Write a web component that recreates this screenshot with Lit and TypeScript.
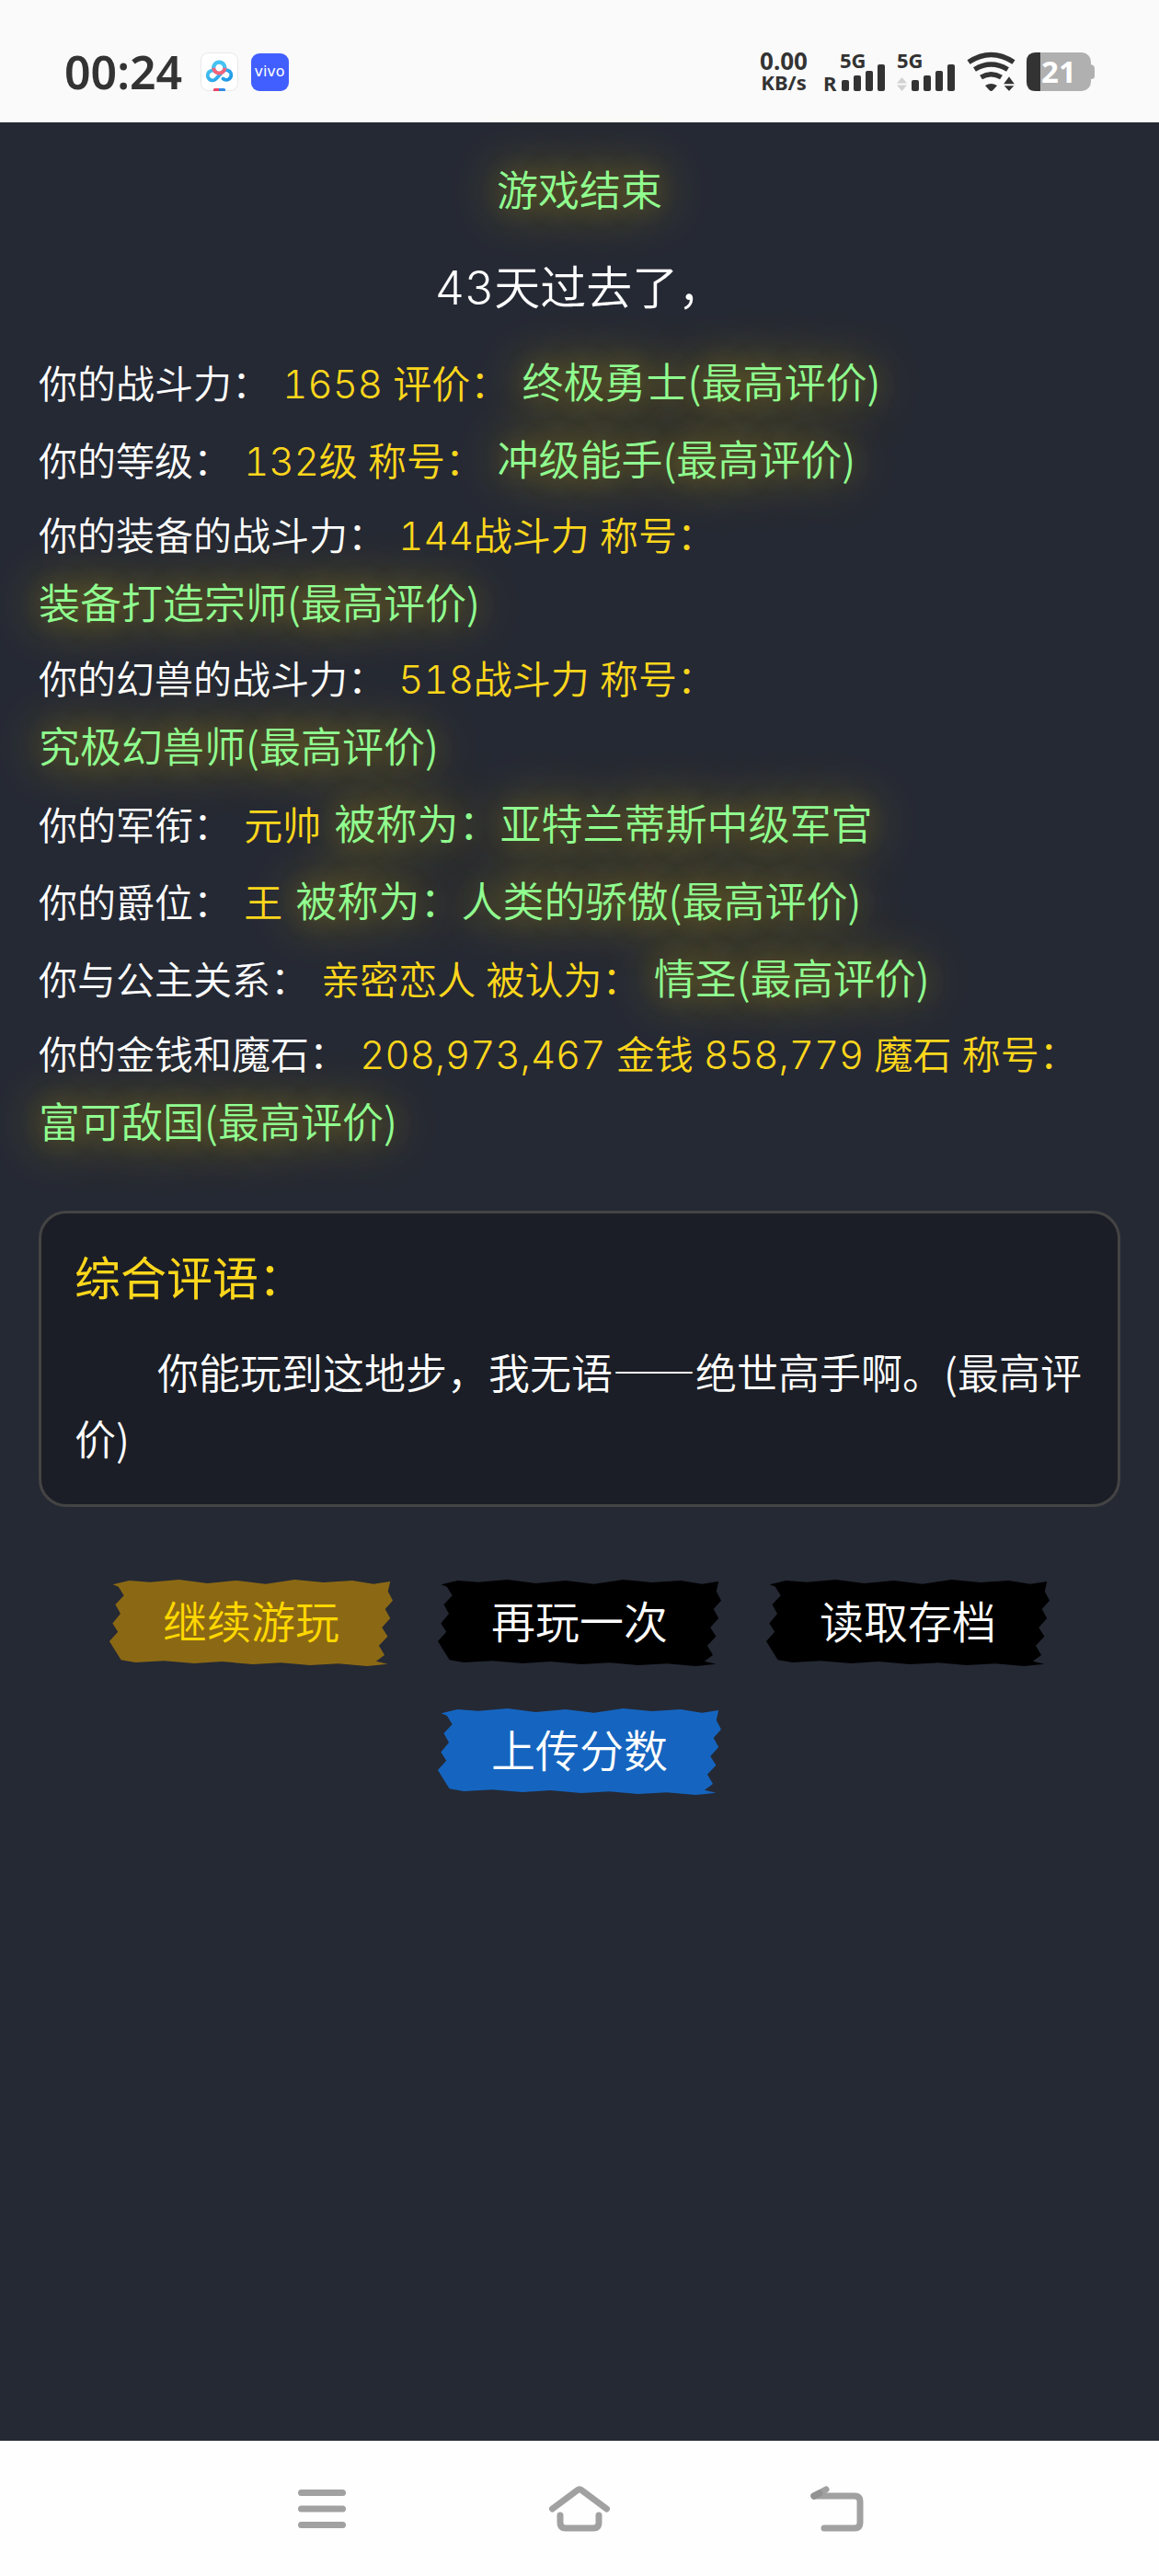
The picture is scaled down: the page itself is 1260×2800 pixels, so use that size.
import { LitElement, html, svg, css } from "lit";
import { customElement } from "lit/decorators.js";

interface Row {
  label: string;
  value: string;
  title: string;
}

const ROWS: Row[] = [
  { label: "你的战斗力：", value: "1658 评价：", title: "终极勇士(最高评价)" },
  { label: "你的等级：", value: "132级 称号：", title: "冲级能手(最高评价)" },
  { label: "你的装备的战斗力：", value: "144战斗力 称号：", title: "装备打造宗师(最高评价)" },
  { label: "你的幻兽的战斗力：", value: "518战斗力 称号：", title: "究极幻兽师(最高评价)" },
  { label: "你的军衔：", value: "元帅", title: "被称为：亚特兰蒂斯中级军官" },
  { label: "你的爵位：", value: "王", title: "被称为：人类的骄傲(最高评价)" },
  { label: "你与公主关系：", value: "亲密恋人 被认为：", title: "情圣(最高评价)" },
  { label: "你的金钱和魔石：", value: "208,973,467 金钱 858,779 魔石 称号：", title: "富可敌国(最高评价)" },
];

@customElement("status-bar")
class StatusBar extends LitElement {
  static styles = css`
    :host {
      display: flex;
      justify-content: space-between;
      padding: 57px 70px 34px;
      background: #fafafa;
      color: #333;
      font-family: "Noto Sans", "Open Sans", sans-serif;
    }
    .side {
      display: flex;
      align-items: center;
      height: 42px;
    }
    .time {
      font-size: 50px;
      line-height: 42px;
      font-weight: 600;
      margin-right: 20px;
    }
    .apps {
      display: flex;
      gap: 14px;
    }
    .speed {
      display: flex;
      flex-direction: column;
      align-items: center;
      font-weight: 700;
      margin-right: 18px;
    }
    .rate {
      font-size: 26px;
      line-height: 22px;
    }
    .unit {
      font-size: 22px;
      line-height: 24px;
    }
    .signals {
      display: flex;
      gap: 12px;
    }
    svg {
      display: block;
      overflow: visible;
    }
    .tag {
      font: 700 22px "Noto Sans", sans-serif;
      fill: #333;
    }
    .brand {
      font: 16px "DejaVu Sans", sans-serif;
      fill: #fff;
    }
    .level {
      font: 700 33px "Noto Sans", sans-serif;
      fill: #fff;
    }
  `;

  private bars(x: number) {
    return [12, 17, 22, 29].map(
      (h, i) => svg`<rect x=${x + i * 13} y=${42 - h} width="8" height=${h} rx="2" fill="#333" />`,
    );
  }

  render() {
    return html`
      <div class="side">
        <span class="time">00:24</span>
        <div class="apps">
          <svg width="41" height="42" viewBox="0 0 41 42" role="img" aria-label="网盘">
            <defs>
              <linearGradient id="sky" x1="0" y1="0" x2="1" y2="1">
                <stop offset="0" stop-color="#4fcbf3" />
                <stop offset="1" stop-color="#1e96e6" />
              </linearGradient>
            </defs>
            <rect x="0.5" y="0.5" width="40" height="41" rx="8" fill="#fff" stroke="#e8e8e8" />
            <path
              d="M23 22 L17 28.5 A5.3 5.3 0 1 1 16.6 21 M14 17 A6 6 0 0 1 26.5 17 M24 21 A5.3 5.3 0 1 1 24.5 28.5"
              fill="none" stroke="url(#sky)" stroke-width="4" stroke-linecap="round" />
            <path d="M14.3 16.5 A6 6 0 0 0 26.3 16.5" fill="none" stroke="#f2647c" stroke-width="4" />
            <path d="M14.3 16.5 A6 6 0 0 1 26.3 16.5" fill="none" stroke="#46c3f2" stroke-width="4" />
            <path d="M15 39 H21 V42 H14 V40 Z" fill="#ee4166" />
            <path d="M20 39 H26 L27 40 V42 H20 Z" fill="#2f8be6" />
          </svg>
          <svg width="41" height="42" viewBox="0 0 41 42" role="img" aria-label="vivo">
            <rect y="1" width="41" height="41" rx="9" fill="#415fff" />
            <text class="brand" x="20" y="26" text-anchor="middle">vivo</text>
          </svg>
        </div>
      </div>
      <div class="side">
        <div class="speed">
          <span class="rate">0.00</span>
          <span class="unit">KB/s</span>
        </div>
        <div class="signals">
          <svg width="67" height="42" viewBox="0 0 67 42" role="img" aria-label="5G R">
            <text class="tag" x="17" y="17">5G</text>
            <text class="tag" x="-1" y="42">R</text>
            ${this.bars(19)}
          </svg>
          <svg width="64" height="42" viewBox="0 0 64 42" role="img" aria-label="5G">
            <text class="tag" x="0" y="17">5G</text>
            <path d="M0 33.5 L5.5 27 L11 33.5 Z M0 35.5 L5.5 42 L11 35.5 Z" fill="#d2d2d2" />
            ${this.bars(16)}
          </svg>
          <svg width="53" height="42" viewBox="0 0 53 42" role="img" aria-label="Wi-Fi">
            <g fill="none" stroke="#333" stroke-width="5.5">
              <path d="M2 10.5 Q26.5 -5.5 51 10.5" />
              <path d="M8.5 18.5 Q26.5 7.5 44.5 18.5" />
              <path d="M15.5 27 Q26.5 20.5 37.5 27" />
            </g>
            <path d="M20 36 Q26.5 32 33 36 L28.5 41 Q26.5 43 24.5 41 Z" fill="#333" />
            <path d="M39 34.5 L46 25 L53 34.5 V35 H39 Z M39 35.5 H53 L46 43 Z" fill="#333" stroke="#fafafa" stroke-width="1.5" />
          </svg>
          <svg width="74" height="42" viewBox="0 0 74 42" role="img" aria-label="电量 21">
            <rect width="70" height="42" rx="10" fill="#b0b0b0" />
            <path d="M70 13 Q74 14 74 17 V26 Q74 29 70 29 Z" fill="#b0b0b0" />
            <path d="M15 0 V42 H10 Q0 42 0 32 V10 Q0 0 10 0 Z" fill="#333" />
            <text class="level" x="16" y="33">21</text>
          </svg>
        </div>
      </div>
    `;
  }
}

@customElement("score-report")
class ScoreReport extends LitElement {
  static styles = css`
    :host {
      display: block;
      font-size: 42px;
      font-variant-numeric: tabular-nums;
      color: #fff;
    }
    .heading {
      margin: 0;
      text-align: center;
      font-size: 45px;
      line-height: 75px;
      font-weight: inherit;
    }
    .days {
      margin: 28px 0 26px;
      text-align: center;
      font-size: 50px;
      line-height: 80px;
    }
    .rows {
      display: flex;
      flex-direction: column;
      gap: 9px;
      margin: 0;
      padding: 0;
      list-style: none;
    }
    .row {
      line-height: 72px;
    }
    .value {
      color: #ffd71c;
      margin: 0 3px 0 2px;
    }
    .title {
      display: inline-block;
      font-family: "Noto Sans CJK SC", sans-serif;
      font-size: 45px;
      line-height: 70px;
    }
    .glow {
      color: #90ff90;
      text-shadow: 0 0 30px rgba(255, 215, 0, 0.3), 0 0 60px rgba(255, 215, 0, 0.7);
    }
    .summary {
      margin-top: 58px;
      padding: 36px;
      border: 3px solid #444;
      border-radius: 30px;
      background: #1b1e26;
    }
    .caption {
      margin: 0 0 30px;
      font-size: 50px;
      line-height: 70px;
      font-weight: 400;
      color: #ffd71c;
    }
    .comment {
      margin: 0;
      font-family: "Noto Sans CJK SC", sans-serif;
      font-size: 45px;
      line-height: 72px;
      text-indent: 2em;
    }
    .dash {
      font-variant-east-asian: full-width;
      font-weight: 700;
    }
  `;

  render() {
    return html`
      <h1 class="heading glow">游戏结束</h1>
      <p class="days">43天过去了，</p>
      <ul class="rows">
        ${ROWS.map(
          (r) => html`<li class="row">
            ${r.label} <span class="value">${r.value}</span>
            <span class="title glow">${r.title}</span>
          </li>`,
        )}
      </ul>
      <section class="summary">
        <h2 class="caption">综合评语：</h2>
        <p class="comment">你能玩到这地步，我无语<span class="dash">——</span>绝世高手啊。(最高评价)</p>
      </section>
    `;
  }
}

@customElement("torn-actions")
class TornActions extends LitElement {
  static styles = css`
    :host {
      display: flex;
      flex-wrap: wrap;
      justify-content: center;
      gap: 46px 49px;
    }
    .action {
      border: 0;
      padding: 11px 58px;
      background: #000;
      color: #fff;
      font: inherit;
      font-size: 48px;
      line-height: 72px;
      cursor: pointer;
      clip-path: polygon(
        1.2% 5.7%, 7% 1%, 14.3% 2.8%, 24.6% 0, 34.6% 4.3%, 45.1% 1%, 55.1% 5%, 65.4% 0,
        75.6% 3.2%, 85.7% 1%, 93.2% 5%, 99.1% 2.1%, 98.3% 13.5%, 100% 24.1%, 97.3% 34%,
        99.1% 44.7%, 96.2% 55.3%, 98.2% 65.6%, 95.1% 76.2%, 97.1% 87.2%, 94.1% 94.3%,
        98.2% 97.5%, 91% 100%, 80.8% 97.2%, 70.7% 98.9%, 60.5% 96.1%, 50.6% 97.9%,
        39.7% 94.7%, 29.9% 96.8%, 19.2% 94%, 9.2% 95.7%, 4.1% 92.9%, 0 71.3%, 3% 60.3%,
        1.1% 50.4%, 3.9% 39.4%, 2.1% 28.7%, 5.1% 18.4%, 3.2% 8.2%
      );
    }
    .gold {
      background: #8b6914;
      color: #ffd700;
    }
    .blue {
      background: #1565c0;
    }
  `;

  render() {
    return html`
      <button class="action gold">继续游玩</button>
      <button class="action">再玩一次</button>
      <button class="action">读取存档</button>
      <button class="action blue">上传分数</button>
    `;
  }
}

@customElement("nav-keys")
class NavKeys extends LitElement {
  static styles = css`
    :host {
      display: flex;
      justify-content: center;
      gap: 200px;
      padding: 34px 0 33px;
      background: #fefefe;
    }
    .key {
      display: grid;
      place-items: center;
      width: 80px;
      height: 80px;
      padding: 0;
      border: 0;
      background: none;
      color: #a1a1a1;
    }
    .glyph {
      width: 70px;
      height: 50px;
      fill: none;
      stroke: currentColor;
      stroke-width: 7;
      stroke-linecap: round;
      stroke-linejoin: round;
    }
  `;

  render() {
    return html`
      <button class="key" aria-label="菜单">
        <svg class="glyph" viewBox="0 0 70 50">
          <path d="M12.5 7.5 H57.5 M12.5 25 H57.5 M12.5 42.5 H57.5" />
        </svg>
      </button>
      <button class="key" aria-label="主页">
        <svg class="glyph" viewBox="0 0 70 50">
          <path d="M5.5 25 L33 4.5 Q35 3 37 4.5 L64.5 25" />
          <path d="M14 32 V40 Q14 46 20 46 H50 Q56 46 56 40 V32" />
        </svg>
      </button>
      <button class="key" aria-label="返回">
        <svg class="glyph" viewBox="0 0 70 50">
          <path d="M10 11 H54 Q60 11 60 17 V40 Q60 46 54 46 H21" />
          <path d="M10 11 L23 4" />
          <path d="M10 11 L16 8" stroke="#929292" />
        </svg>
      </button>
    `;
  }
}

@customElement("app-root")
class AppRoot extends LitElement {
  static styles = css`
    :host {
      display: flex;
      flex-direction: column;
      min-height: 100vh;
      background: #252934;
      font-family: Inter, "Noto Sans CJK SC", sans-serif;
      font-weight: 350;
    }
    .screen {
      flex: 1;
      display: flex;
      flex-direction: column;
      gap: 79px;
      padding: 37px 42px;
    }
  `;

  render() {
    return html`
      <status-bar></status-bar>
      <main class="screen">
        <score-report></score-report>
        <torn-actions></torn-actions>
      </main>
      <nav-keys></nav-keys>
    `;
  }
}
